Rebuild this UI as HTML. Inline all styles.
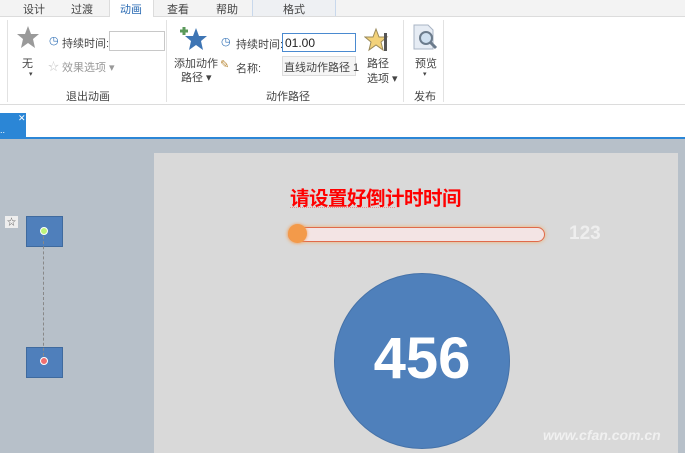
<!DOCTYPE html><html><head><style>
body{margin:0;width:685px;height:453px;overflow:hidden;position:relative;font-family:"Liberation Sans","Noto Sans CJK SC",sans-serif;font-size:11px;color:#444;background:#b7c0c9}
.a{position:absolute;white-space:nowrap}
</style></head><body>
<div class="a" style="left:0;top:0;width:685px;height:16px;background:#f3f3f3;border-bottom:1px solid #dcdcdc"></div>
<div class="a" style="left:109px;top:0;width:43px;height:17px;background:#fff;border-left:1px solid #dcdcdc;border-right:1px solid #dcdcdc"></div>
<div class="a" style="left:252px;top:0;width:82px;height:16px;border-left:1px solid #c8d8ec;border-right:1px solid #c8d8ec;background:#eef0f3"></div>
<div class="a" style="left:23px;top:1px">设计</div><div class="a" style="left:71px;top:1px">过渡</div>
<div class="a" style="left:120px;top:1px;color:#2b6cb4">动画</div><div class="a" style="left:167px;top:1px">查看</div>
<div class="a" style="left:216px;top:1px">帮助</div><div class="a" style="left:283px;top:1px">格式</div>
<div class="a" style="left:0;top:17px;width:685px;height:87px;background:#fff;border-bottom:1px solid #dcdcdc"></div>
<div class="a" style="left:7px;top:20px;width:1px;height:82px;background:#e2e2e2"></div>
<div class="a" style="left:166px;top:20px;width:1px;height:82px;background:#e2e2e2"></div>
<div class="a" style="left:403px;top:20px;width:1px;height:82px;background:#e2e2e2"></div>
<div class="a" style="left:443px;top:20px;width:1px;height:82px;background:#e2e2e2"></div>
<svg class="a" style="left:16px;top:25px" width="24" height="24"><polygon points="12,1 15,9 23,9 17,14 19,23 12,18 5,23 7,14 1,9 9,9" fill="#9a9a9a"/></svg>
<div class="a" style="left:22px;top:55px">无</div><div class="a" style="left:29px;top:70px;font-size:7px">▾</div>
<div class="a" style="left:49px;top:34px;color:#2b6cb4">◷</div><div class="a" style="left:62px;top:35px">持续时间:</div>
<div class="a" style="left:109px;top:31px;width:54px;height:18px;border:1px solid #c8c8c8"></div>
<div class="a" style="left:48px;top:58px;color:#ccc">☆</div><div class="a" style="left:62px;top:59px;color:#999">效果选项 ▾</div>
<div class="a" style="left:66px;top:88px">退出动画</div>
<svg class="a" style="left:180px;top:24px" width="30" height="28"><path d="M4 3v8M0 7h8" stroke="#5b9a5b" stroke-width="3"/><polygon points="16,4 19,12 27,12 21,17 23,26 16,21 9,26 11,17 5,12 13,12" fill="#3e75b4"/></svg>
<div class="a" style="left:174px;top:55px">添加动作</div><div class="a" style="left:181px;top:69px">路径 ▾</div>
<div class="a" style="left:221px;top:35px;color:#2b6cb4">◷</div><div class="a" style="left:236px;top:36px">持续时间:</div>
<div class="a" style="left:282px;top:33px;width:72px;height:17px;border:1px solid #4a8ad0;background:#fff"></div>
<div class="a" style="left:285px;top:36px;color:#222;font-size:12px">01.00</div>
<div class="a" style="left:220px;top:58px;color:#b98a3a">✎</div><div class="a" style="left:236px;top:60px">名称:</div>
<div class="a" style="left:282px;top:56px;width:72px;height:18px;border:1px solid #ddd;background:#f5f5f5"></div>
<div class="a" style="left:284px;top:59px">直线动作路径 1</div>
<svg class="a" style="left:364px;top:27px" width="26" height="26"><polygon points="12,2 15,10 23,10 17,15 19,23 12,18 5,23 7,15 1,10 9,10" fill="#f3d27a" stroke="#9a8a5a"/><rect x="20" y="6" width="3" height="18" fill="#555"/></svg>
<div class="a" style="left:367px;top:55px">路径</div><div class="a" style="left:367px;top:70px">选项 ▾</div>
<div class="a" style="left:266px;top:88px">动作路径</div>
<svg class="a" style="left:411px;top:24px" width="28" height="28"><path d="M3 1h14l5 5v19H3z" fill="#e6ecf4" stroke="#a8b4c4"/><circle cx="15" cy="14" r="6" fill="#cfe0f0" stroke="#6c7c8c" stroke-width="2"/><path d="M19 18l6 6" stroke="#6c7c8c" stroke-width="3"/></svg>
<div class="a" style="left:415px;top:55px">预览</div><div class="a" style="left:423px;top:70px;font-size:7px">▾</div>
<div class="a" style="left:414px;top:88px">发布</div>
<div class="a" style="left:0;top:105px;width:685px;height:33px;background:#fff"></div>
<div class="a" style="left:0;top:113px;width:26px;height:25px;background:#2b86d6;color:#fff;font-size:9px"><span style="position:absolute;left:18px;top:0">✕</span><span style="position:absolute;left:0;top:12px">..</span></div>
<div class="a" style="left:0;top:137px;width:685px;height:2px;background:#2b86d6"></div>
<div class="a" style="left:154px;top:153px;width:524px;height:300px;background:#d9d9d9"></div>
<div class="a" style="left:290px;top:182px;color:#f00;font-family:'Noto Sans CJK SC',sans-serif;font-weight:bold;font-size:19.5px;letter-spacing:-0.5px">请设置好倒计时时间</div>
<div class="a" style="left:290px;top:207px;width:105px;border-top:1px dotted #e88"></div>
<div class="a" style="left:288px;top:227px;width:255px;height:13px;border:1px solid #e06a4a;border-radius:8px;background:#f3e4e4;box-shadow:0 0 4px #f0b070"></div>
<div class="a" style="left:288px;top:224px;width:19px;height:19px;border-radius:50%;background:#f39a4a;box-shadow:0 0 3px #f0a060"></div>
<div class="a" style="left:569px;top:223px;color:#eee;font-size:19px;font-weight:bold">123</div>
<div class="a" style="left:334px;top:273px;width:174px;height:174px;border-radius:50%;background:#4f80bb;border:1px solid #4672a8"></div>
<div class="a" style="left:334px;top:325px;width:176px;text-align:center;color:#fff;font-size:58px;font-weight:bold">456</div>
<div class="a" style="left:543px;top:427px;color:#f0f0f0;font-size:14px;font-style:italic;font-weight:bold">www.cfan.com.cn</div>
<div class="a" style="left:5px;top:216px;width:13px;height:12px;background:#eee;font-size:9px;color:#555;text-align:center;line-height:12px">☆</div>
<div class="a" style="left:26px;top:216px;width:35px;height:29px;background:#4f7fbb;border:1px solid #3f6a9e"></div>
<div class="a" style="left:26px;top:347px;width:35px;height:29px;background:#4f7fbb;border:1px solid #3f6a9e"></div>
<div class="a" style="left:43px;top:231px;height:130px;border-left:1px dashed #888"></div>
<div class="a" style="left:40px;top:227px;width:6px;height:6px;border-radius:50%;background:#bdf37a;border:1px solid #fff"></div>
<div class="a" style="left:40px;top:357px;width:6px;height:6px;border-radius:50%;background:#f07070;border:1px solid #fff"></div>
</body></html>
